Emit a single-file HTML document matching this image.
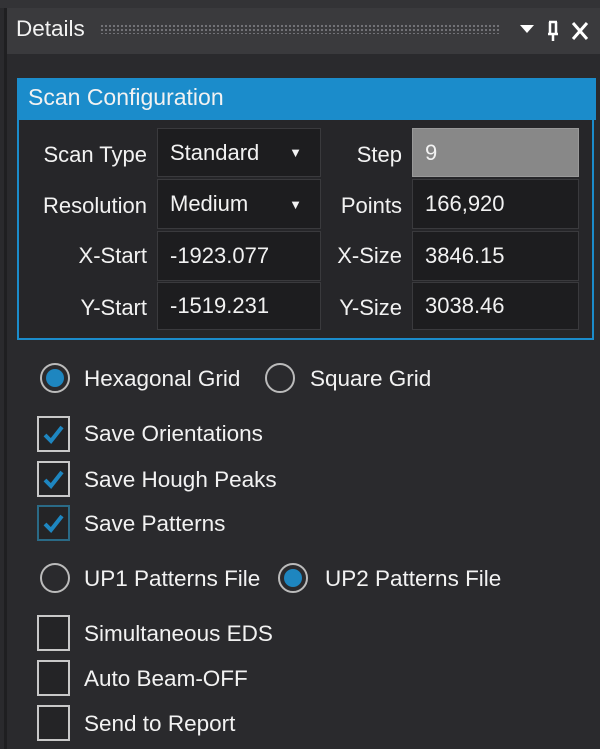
<!DOCTYPE html>
<html><head><style>
body{margin:0;width:600px;height:749px;background:#2a2a2d;font-family:"Liberation Sans",sans-serif;color:#f2f2f2;overflow:hidden;position:relative}
.a{position:absolute}
.t{font-size:22.5px;white-space:nowrap}
.cell{position:absolute;background:#1d1d1f;border:1px solid #3a3a3d;box-sizing:border-box;font-size:22px;padding-left:12px;display:flex;align-items:center}
.lbl{position:absolute;font-size:22px;text-align:right;width:140px;white-space:nowrap;direction:rtl}
.rad{position:absolute;width:30px;height:30px;border:2px solid #bbb;border-radius:50%;box-sizing:border-box}
.rad.on::after{content:"";position:absolute;left:4px;top:4px;width:18px;height:18px;border-radius:50%;background:#1e86c0}
.cb{position:absolute;left:37px;width:33px;height:36px;border:2px solid #c8c8c8;box-sizing:border-box;background:#242426}
.cb svg{position:absolute;left:4px;top:6px}
</style></head><body>
<div class="a" style="left:0;top:0;width:600px;height:8px;background:#333336"></div>
<div class="a" style="left:4px;top:8px;width:3px;height:741px;background:#1f1f21"></div>
<div class="a" style="left:7px;top:8px;width:593px;height:46px;background:#3a3a3d"></div>
<div class="a t" style="left:16px;top:16px;font-size:22.5px">Details</div>
<div class="a" style="left:100px;top:24px;width:400px;height:10px;background-image:radial-gradient(#75757a 1px,transparent 1.3px);background-size:4px 4px"></div>
<svg class="a" style="left:518px;top:20px" width="80" height="22"><path d="M2 5 L16 5 L9 13Z" fill="#fff"/><path d="M32 2 V14 M38 2 V14 M30 14 H40 M35 14 V21 M31 2 H39" stroke="#fff" stroke-width="2.5" fill="none"/><path d="M55 3 L69 19 M69 3 L55 19" stroke="#fff" stroke-width="3"/></svg>
<div class="a" style="left:17px;top:78px;width:579px;height:42px;background:#1b8ccb"></div>
<div class="a t" style="left:28px;top:84px;font-size:23px">Scan Configuration</div>
<div class="a" style="left:17px;top:120px;width:577px;height:220px;border:2px solid #1b8ccb;border-top:none;box-sizing:border-box;background:#262629"></div>
<div class="lbl" style="left:7px;top:142px">Scan Type</div>
<div class="lbl" style="left:7px;top:193px">Resolution</div>
<div class="lbl" style="left:7px;top:243px">X-Start</div>
<div class="lbl" style="left:7px;top:295px">Y-Start</div>
<div class="lbl" style="left:262px;top:142px">Step</div>
<div class="lbl" style="left:262px;top:193px">Points</div>
<div class="lbl" style="left:262px;top:243px">X-Size</div>
<div class="lbl" style="left:262px;top:295px">Y-Size</div>
<div class="cell" style="left:157px;top:128px;width:164px;height:49px">Standard<span style="position:absolute;right:18px;font-size:13px">▼</span></div>
<div class="cell" style="left:157px;top:179px;width:164px;height:50px">Medium<span style="position:absolute;right:18px;font-size:13px">▼</span></div>
<div class="cell" style="left:157px;top:231px;width:164px;height:50px">-1923.077</div>
<div class="cell" style="left:157px;top:282px;width:164px;height:48px">-1519.231</div>
<div class="cell" style="left:412px;top:128px;width:167px;height:49px;background:#888;border-color:#999">9</div>
<div class="cell" style="left:412px;top:179px;width:167px;height:50px">166,920</div>
<div class="cell" style="left:412px;top:231px;width:167px;height:50px">3846.15</div>
<div class="cell" style="left:412px;top:282px;width:167px;height:48px">3038.46</div>
<div class="rad on" style="left:40px;top:363px"></div>
<div class="a t" style="left:84px;top:366px">Hexagonal Grid</div>
<div class="rad" style="left:265px;top:363px"></div>
<div class="a t" style="left:310px;top:366px">Square Grid</div>
<div class="cb" style="top:416px"><svg width="22" height="22"><path d="M2 11 L8 17 L19 3" stroke="#1e86c0" stroke-width="4" fill="none"/></svg></div>
<div class="a t" style="left:84px;top:421px">Save Orientations</div>
<div class="cb" style="top:461px"><svg width="22" height="22"><path d="M2 11 L8 17 L19 3" stroke="#1e86c0" stroke-width="4" fill="none"/></svg></div>
<div class="a t" style="left:84px;top:467px">Save Hough Peaks</div>
<div class="cb" style="top:505px;border-color:#2a6a86"><svg width="22" height="22"><path d="M2 11 L8 17 L19 3" stroke="#1e86c0" stroke-width="4" fill="none"/></svg></div>
<div class="a t" style="left:84px;top:511px">Save Patterns</div>
<div class="rad" style="left:40px;top:563px"></div>
<div class="a t" style="left:84px;top:566px">UP1 Patterns File</div>
<div class="rad on" style="left:278px;top:563px"></div>
<div class="a t" style="left:325px;top:566px">UP2 Patterns File</div>
<div class="cb" style="top:615px"></div>
<div class="a t" style="left:84px;top:621px">Simultaneous EDS</div>
<div class="cb" style="top:660px"></div>
<div class="a t" style="left:84px;top:666px">Auto Beam-OFF</div>
<div class="cb" style="top:705px"></div>
<div class="a t" style="left:84px;top:711px">Send to Report</div>
</body></html>
